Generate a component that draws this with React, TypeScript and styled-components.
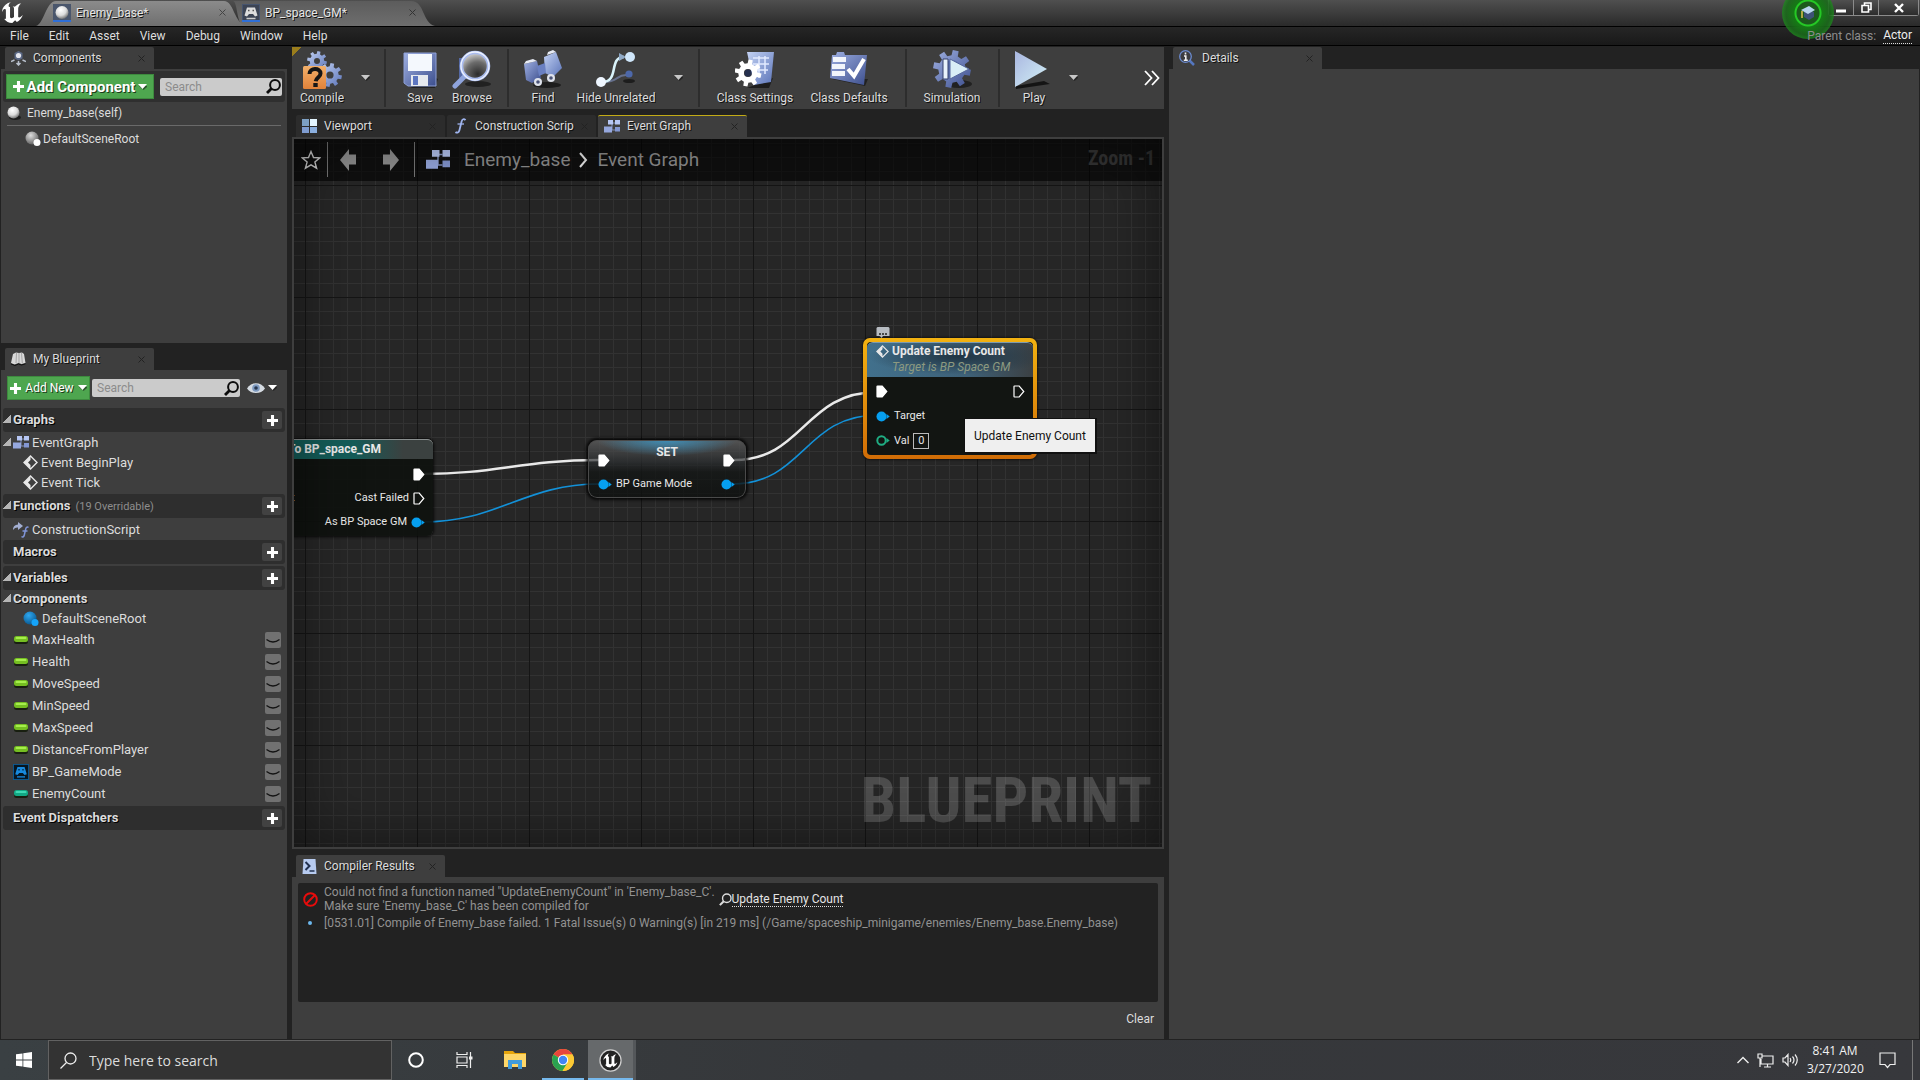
import React from "react";
import styled, { createGlobalStyle, css } from "styled-components";

const ui = `Roboto, "Liberation Sans", sans-serif`;
const narrow = `"Roboto Condensed", "Liberation Sans Narrow", Roboto, sans-serif`;
const windows = `"Segoe UI", "Open Sans", "Noto Sans", sans-serif`;

const Global = createGlobalStyle`
  *, *::before, *::after { box-sizing: border-box; }
  body { margin: 0; background: #222; overflow: hidden; }
  button, input, a { font: inherit; color: inherit; }
  button { background: none; border: 0; padding: 0; }
  input { min-width: 0; }
  a { text-decoration: none; }
  svg { display: block; flex: none; }
  ul { list-style: none; margin: 0; padding: 0; }
`;

const Shell = styled.div`
  height: 100vh;
  display: flex;
  flex-direction: column;
  background: #222;
  color: #dcdcdc;
  font: 12px/16px ${ui};
`;

/* ---------- title bar and menu ---------- */
const TitleBar = styled.header`
  height: 27px;
  display: flex;
  align-items: flex-start;
  background: linear-gradient(#4f4f4f, #2a2a2a);
  border-bottom: 1px solid #000;
`;
const LogoBox = styled.div`
  width: 36px;
  height: 26px;
  padding: 2px 0 0 1px;
`;
const AppTabs = styled.nav`
  display: flex;
  padding-top: 1px;
  flex: 1;
`;
const AppTab = styled.button<{ $front?: boolean }>`
  position: relative;
  z-index: ${(p) => (p.$front ? 1 : 0)};
  width: ${(p) => (p.$front ? 201 : 198)}px;
  height: 25px;
  display: flex;
  align-items: center;
  gap: 5px;
  padding: ${(p) => (p.$front ? "0 11px 2px 17px" : "0 19px 2px 5px")};
  text-shadow: 1px 1px 0 #111;
  color: #e6e6e6;
  text-align: left;
  > span { flex: 1; position: relative; }
  > svg { position: relative; }
`;
const TabShape = styled.svg`
  && { position: absolute; left: 0; top: 0; overflow: visible; }
`;
const WindowButtons = styled.div`
  display: flex;
  width: 91px;
  height: 16px;
  margin-right: 1px;
  border: 1px solid #8b8b8b;
  border-top: 0;
  border-radius: 0 0 3px 3px;
  button {
    display: grid;
    place-items: center;
    height: 15px;
    width: 25px;
    background: linear-gradient(#505050, #2c2c2c);
    border-right: 1px solid #8b8b8b;
  }
  button:last-child { flex: 1; border: 0; }
`;
const Halo = styled.div`
  position: absolute;
  top: -13px;
  right: 86px;
  width: 52px;
  height: 52px;
  border-radius: 50%;
  display: grid;
  place-items: center;
  background: radial-gradient(circle, #1c5a1c 0 11px, #25c825 12px 13px, #157a15 14px, #1a6a1add 22px, #1d8a1dcc 26px);
  z-index: 2;
`;
const MenuBar = styled.nav`
  height: 19px;
  display: flex;
  align-items: center;
  background: linear-gradient(#262626, #191919);
  border-bottom: 1px solid #000;
  button { padding: 0 10px; color: #dedede; }
`;
const ParentClass = styled.div`
  margin-left: auto;
  padding-right: 8px;
  display: flex;
  gap: 7px;
  color: #8e8e8e;
  position: relative;
  z-index: 3;
  a { color: #eee; border-bottom: 1px dotted #ddd; line-height: 14px; }
`;

/* ---------- docking layout ---------- */
const Workspace = styled.main`
  flex: 1;
  min-height: 0;
  display: grid;
  grid-template-columns: 286px minmax(0, 872fr) minmax(0, 750fr);
  gap: 5px;
  padding: 1px;
`;
const Column = styled.div`
  display: flex;
  flex-direction: column;
  min-height: 0;
  min-width: 0;
`;
const Panel = styled.section<{ $h?: number }>`
  display: flex;
  flex-direction: column;
  min-height: 0;
  ${(p) => (p.$h ? `flex: 0 0 ${p.$h}px;` : "flex: 1;")}
`;
const TabStrip = styled.div`
  display: flex;
  gap: 2px;
  padding-left: 4px;
  flex: none;
`;
const DockTab = styled.button<{ $state?: "back" | "active" }>`
  width: 149px;
  height: 22px;
  display: flex;
  align-items: center;
  gap: 7px;
  padding: 0 9px 1px 6px;
  background: ${(p) => (p.$state === "back" ? "#2c2c2c" : "#3e3e3e")};
  border-top: 1px solid ${(p) => (p.$state === "active" ? "#c2ab16" : "transparent")};
  border-radius: 2px 2px 0 0;
  text-shadow: 1px 1px 0 #111;
  text-align: left;
  white-space: nowrap;
  > span { flex: 1; }
`;
const PanelBody = styled.div`
  flex: 1;
  min-height: 0;
  background: #3e3e3e;
  padding: 2px;
`;
const Spacer = styled.div<{ $h: number }>`
  flex: 0 0 ${(p) => p.$h}px;
`;

/* ---------- left panels ---------- */
const ToolStrip = styled.div<{ $dark?: boolean }>`
  display: flex;
  align-items: center;
  height: ${(p) => (p.$dark ? 31 : 36)}px;
  gap: ${(p) => (p.$dark ? 6 : 2)}px;
  padding: ${(p) => (p.$dark ? "0 3px" : "0 4px 4px")};
  border-radius: 3px;
  background: ${(p) => (p.$dark ? "#2f2f2f" : "transparent")};
`;
const GreenButton = styled.button<{ $big?: boolean }>`
  display: flex;
  align-items: center;
  justify-content: center;
  flex: none;
  gap: ${(p) => (p.$big ? 3 : 4)}px;
  width: ${(p) => (p.$big ? 148 : 83)}px;
  height: ${(p) => (p.$big ? 25 : 24)}px;
  background: #4ea64f;
  border: 1px solid #3d8a3e;
  color: #fff;
  font-weight: ${(p) => (p.$big ? 700 : 400)};
  font-size: ${(p) => (p.$big ? 15 : 12)}px;
  text-shadow: 1px 1px 0 #1a3a1a;
  white-space: nowrap;
`;
const SearchField = styled.label`
  flex: 1;
  min-width: 0;
  height: 18px;
  display: flex;
  align-items: center;
  padding: 0 1px 0 5px;
  border-radius: 2px;
  background: #cbcbcb;
  input {
    flex: 1;
    border: 0;
    padding: 0;
    background: none;
    outline: 0;
    color: #222;
  }
  input::placeholder { color: #8c8c8c; opacity: 1; }
`;
const EyeButton = styled.button`
  display: flex;
  align-items: center;
  gap: 3px;
  margin: 0 4px 0 5px;
`;
const SelfRow = styled.div`
  display: flex;
  align-items: center;
  gap: 6px;
  height: 24px;
  padding-bottom: 2px;
  margin: 0 4px;
  border-bottom: 1px solid #6a6a6a;
`;
const RootRow = styled.div`
  display: flex;
  align-items: center;
  gap: 2px;
  height: 26px;
  padding-left: 22px;
`;
const Section = styled.div`
  display: flex;
  align-items: center;
  height: 24px;
  margin-bottom: 2px;
  padding-right: 3px;
  border-radius: 3px;
  background: #2e2e2e;
  font-size: 13px;
  font-weight: 700;
  text-shadow: 1px 1px 0 #000;
  small {
    font-size: 11px;
    font-weight: 400;
    color: #8d8d8d;
    margin: 2px 0 0 5px;
    text-shadow: none;
  }
`;
const OpenSection = styled(Section)`
  margin-bottom: 0;
`;
const Arrow = styled.span`
  width: 8px;
  height: 8px;
  margin-right: 2px;
  flex: none;
`;
const OpenArrow = styled(Arrow)`
  background: linear-gradient(135deg, transparent 50%, #b5b5b5 50%);
  margin-top: -2px;
`;
const PlusButton = styled.button`
  margin-left: auto;
  width: 20px;
  height: 18px;
  display: grid;
  place-items: center;
  border-radius: 2px;
  background: #424242;
`;
const Tree = styled.ul<{ $pb?: number }>`
  padding-bottom: ${(p) => p.$pb ?? 0}px;
  font-size: 13px;
`;
const TreeRow = styled.li<{ $h: number; $indent?: number; $bold?: boolean }>`
  display: flex;
  align-items: center;
  height: ${(p) => p.$h}px;
  padding: ${(p) => (p.$bold ? 0 : 1)}px 4px 0 ${(p) => p.$indent ?? 0}px;
  gap: 3px;
  font-weight: ${(p) => (p.$bold ? 700 : 400)};
  ${(p) => p.$bold && css`gap: 0; text-shadow: 1px 1px 0 #111;`}
  > ${OpenArrow} { margin-right: ${(p) => (p.$bold ? 2 : -1)}px; }
`;
const Lid = styled.button`
  margin-left: auto;
  width: 16px;
  height: 16px;
  border-radius: 2px;
  background: #717171;
`;

/* ---------- toolbar ---------- */
const Toolbar = styled.div`
  height: 62px;
  flex: none;
  display: flex;
  align-items: center;
  background: linear-gradient(135deg, #9a7d1c 7px, transparent 7px) #3e3e3e;
`;
const ToolGroup = styled.div<{ $w: number; $pad?: number }>`
  width: ${(p) => p.$w}px;
  height: 58px;
  flex: none;
  display: flex;
  align-items: center;
  padding-left: ${(p) => p.$pad ?? 0}px;
  border-right: 2px solid #2d2d2d;
`;
const LastGroup = styled(ToolGroup)`
  flex: 1;
  border: 0;
`;
const ToolButton = styled.button<{ $w: number }>`
  width: ${(p) => p.$w}px;
  height: 58px;
  flex: none;
  display: flex;
  flex-direction: column;
  align-items: center;
  padding-top: 1px;
  white-space: nowrap;
  text-shadow: 1px 1px 0 #111;
`;
const DropButton = styled.button`
  width: 28px;
  height: 50px;
  display: grid;
  place-items: center;
`;
const MoreButton = styled.button`
  margin: 0 4px 0 auto;
`;

/* ---------- graph ---------- */
const GraphFrame = styled.div`
  flex: 1;
  min-height: 0;
  border: 2px solid #3e3e3e;
  display: flex;
`;
const Canvas = styled.div`
  position: relative;
  flex: 1;
  overflow: hidden;
  background-color: #262626;
  background-image:
    linear-gradient(90deg, #151515 1px, transparent 1px),
    linear-gradient(#151515 1px, transparent 1px),
    linear-gradient(90deg, #323232 1px, transparent 1px),
    linear-gradient(#323232 1px, transparent 1px);
  background-size: 112px 112px, 112px 112px, 14px 14px, 14px 14px;
  background-position: 11px 46px;
  &::after {
    content: "";
    position: absolute;
    inset: 0;
    box-shadow: inset 0 0 60px rgba(0, 0, 0, 0.5);
    pointer-events: none;
  }
`;
const CrumbBar = styled.div`
  position: relative;
  height: 42px;
  padding-bottom: 1px;
  display: flex;
  align-items: center;
  background: rgba(0, 0, 0, 0.6);
  color: #8d8d8d;
  font-size: 19px;
  line-height: 24px;
`;
const CrumbButton = styled.button<{ $line?: boolean; $w: number }>`
  width: ${(p) => p.$w}px;
  height: 35px;
  display: grid;
  place-items: center;
  border-right: ${(p) => (p.$line ? "1px solid #777" : "0")};
`;
const Crumbs = styled.div`
  display: flex;
  align-items: center;
  gap: 9px;
  padding-left: 11px;
  > svg:first-child { margin-right: 5px; }
`;
const ZoomLabel = styled.span`
  margin-left: auto;
  padding: 0 7px 4px 0;
  font: 700 20px/24px ${narrow};
  color: #333;
`;
const Watermark = styled.div`
  position: absolute;
  right: 10px;
  bottom: 10px;
  font: 700 63px/72px ${narrow};
  color: rgba(255, 255, 255, 0.18);
`;
const Wires = styled.svg`
  position: absolute;
  inset: 0;
  width: 100%;
  height: 100%;
  fill: none;
`;
const Node = styled.article<{ $x: number; $y: number; $w: number; $h: number }>`
  position: absolute;
  left: ${(p) => p.$x}px;
  top: ${(p) => p.$y}px;
  width: ${(p) => p.$w}px;
  height: ${(p) => p.$h}px;
  border-radius: 6px;
  background: rgba(14, 17, 14, 0.92);
  box-shadow: 0 0 3px 1px rgba(0, 0, 0, 0.8), inset 0 1px 0 #777;
  color: #e8e8e8;
  font-size: 11px;
  line-height: 16px;
`;
const SetNode = styled(Node)`
  border-radius: 9px;
  background: radial-gradient(ellipse 70px 16px at 50% 0, #3f8fb8, transparent), linear-gradient(rgba(95, 95, 95, .8), rgba(45, 48, 50, .7) 22px, rgba(20, 23, 22, .8) 32px, rgba(14, 16, 15, .8));
  box-shadow: 0 0 3px 2px rgba(0, 0, 0, 0.8), inset 0 0 0 1px #4a4a4a;
`;
const SelectedNode = styled(Node)`
  background: linear-gradient(#f2b211, #d06c06);
  padding: 4px;
  border-radius: 7px;
  box-shadow: 0 0 3px #000;
`;
const SelectedInner = styled.div`
  height: 100%;
  border-radius: 4px;
  overflow: hidden;
  background: #121512;
`;
const NodeHead = styled.h3<{ $tone: "teal" | "blue" | "none" }>`
  margin: 0;
  font-size: 12px;
  font-weight: 700;
  line-height: 20px;
  height: ${(p) => ({ blue: 35, teal: 20, none: 18 })[p.$tone]}px;
  border-radius: 6px 6px 0 0;
  white-space: nowrap;
  ${(p) =>
    p.$tone === "teal" &&
    css`background: linear-gradient(90deg, #145c58 60%, #3b4140 85%); padding-right: 52px; text-align: right; border-top: 1px solid #8a8f8f; line-height: 18px;`}
  ${(p) =>
    p.$tone === "blue" &&
    css`
      background: radial-gradient(ellipse 90px 18px at 55% 40%, #203443, transparent), linear-gradient(90deg, #41708c, #3e6178 60%, #3b4043);
      padding-left: 9px;
      display: grid;
      grid-template-columns: 12px auto;
      column-gap: 4px;
      align-items: center;
      align-content: start;
      line-height: 16px;
      border-top: 1px solid #7c9bb0;
    `}
  ${(p) => p.$tone === "none" && css`text-align: center; line-height: 24px;`}
  em { grid-column: 2; font-weight: 400; color: #8d9a80; }
`;
const PinRow = styled.div<{ $h: number; $l?: number; $r?: number }>`
  display: flex;
  align-items: center;
  justify-content: space-between;
  height: ${(p) => p.$h}px;
  padding: 0 ${(p) => p.$r ?? 8}px 0 ${(p) => p.$l ?? 9}px;
`;
const PinLabel = styled.label`
  display: flex;
  align-items: center;
  gap: 4px;
  white-space: nowrap;
`;
const ValueInput = styled.input`
  width: 16px;
  height: 16px;
  padding: 0;
  border: 1px solid #bbb;
  background: transparent;
  text-align: center;
`;
const Bubble = styled.svg`
  position: absolute;
  left: 582px;
  top: 188px;
`;
const Tooltip = styled.div`
  position: absolute;
  left: 670px;
  top: 279px;
  padding: 9px 9px 8px;
  background: #efefef;
  border: 1px solid #111;
  border-right-width: 2px;
  border-bottom-width: 2px;
  color: #111;
  font-size: 12px;
  line-height: 16px;
  white-space: nowrap;
  z-index: 1;
`;

/* ---------- compiler results ---------- */
const ResultsBody = styled.div`
  flex: 1;
  display: flex;
  flex-direction: column;
  background: #3e3e3e;
  padding: 6px;
`;
const Log = styled.ul`
  flex: 0 0 119px;
  background: #222;
  border-radius: 2px;
  color: #929292;
  && { padding: 2px 5px; }
  li {
    display: flex;
    align-items: center;
    line-height: 14px;
    padding-bottom: 3px;
  }
  li > svg { margin-right: 6px; }
  a { display: flex; align-items: center; margin-left: 4px; color: #e5e5e5; }
  a span { border-bottom: 1px dotted #ddd; }
`;
const Bullet = styled.i`
  width: 4px;
  height: 4px;
  margin: 0 12px 0 5px;
  border-radius: 50%;
  background: #6cb8ee;
`;
const ClearButton = styled.button`
  margin: 9px 4px 0 auto;
`;

/* ---------- taskbar ---------- */
const Taskbar = styled.footer`
  height: 40px;
  flex: none;
  display: flex;
  align-items: stretch;
  background: linear-gradient(90deg, #3a4043, #35373a 45%, #37383c);
  color: #f2f2f2;
  font: 12px/18px ${windows};
`;
const TaskButton = styled.button<{ $run?: boolean; $on?: boolean; $w?: number }>`
  width: ${(p) => p.$w ?? 48}px;
  display: grid;
  place-items: center;
  ${(p) => p.$on && css`background: #66696b; margin-left: 4px; border-right: 3px solid #54575a;`}
  ${(p) => p.$run && css`box-shadow: inset 0 -2px 0 #76b9ed;`}
`;
const TaskSearch = styled.label`
  width: 344px;
  display: flex;
  align-items: center;
  gap: 12px;
  padding-left: 11px;
  background: #333;
  border: 1px solid #626262;
  input {
    flex: 1;
    border: 0;
    padding: 1px 0 0;
    background: none;
    font-size: 14px;
    outline: 0;
  }
  input::placeholder { color: #dcdcdc; opacity: 1; }
`;
const Tray = styled.div`
  margin-left: auto;
  display: flex;
  align-items: center;
  gap: 8px;
  padding-right: 4px;
`;
const Clock = styled.time`
  width: 56px;
  margin-right: 8px;
  text-align: center;
`;
const ShowDesktop = styled.button`
  align-self: stretch;
  margin-left: 8px;
  width: 4px;
  border-left: 1px solid #777;
`;

/* ---------- icons ---------- */
const gear = (cx: number, cy: number, r: number, teeth = 8) => {
  const pts: string[] = [];
  for (let i = 0; i < teeth; i++) {
    const a = (i / teeth) * Math.PI * 2 + 0.2;
    const s = (Math.PI * 2) / teeth;
    [[0.72, -0.3], [1, -0.2], [1, 0.2], [0.72, 0.3]].forEach(([k, o]) =>
      pts.push(`${(cx + Math.cos(a + o * s) * r * k).toFixed(2)} ${(cy + Math.sin(a + o * s) * r * k).toFixed(2)}`)
    );
  }
  const h = r * 0.3;
  return `M${pts.join("L")}Z M${cx - h} ${cy}a${h} ${h} 0 1 0 ${h * 2} 0a${h} ${h} 0 1 0 ${-h * 2} 0Z`;
};

const U_PATH =
  "M19.13 13.729c-.206.997-1.126 3.557-4.06 4.942l-1.179-1.325-1.988 2a7.338 7.338 0 01-5.804-2.978 2.859 2.859 0 00.65.123c.326.006.678-.114.678-.66v-5.394a.89.89 0 00-1.116-.89c-.92.212-1.656 2.509-1.656 2.509a7.304 7.304 0 012.528-5.597 7.408 7.408 0 013.73-1.721c-1.006.573-1.57 1.507-1.57 2.29 0 1.262.76 1.109.984.923v7.28a1.157 1.157 0 00.148.256 1.075 1.075 0 00.88.445c.76 0 1.747-.868 1.747-.868V9.172c0-.6-.452-1.324-.905-1.572 0 0 .838.149 1.484.346a5.537 5.537 0 01.387-.425c1.508-1.48 2.929-1.902 4.112-2.112 0 0-2.151 1.69-2.151 3.96 0 1.687.043 5.801.043 5.801.799.771 1.986-.342 3.059-1.441Z";

const DefsSvg = styled.svg`
  position: absolute;
`;
const Defs = () => (
  <DefsSvg width="0" height="0" aria-hidden>
    <defs>
      <linearGradient id="blue" x1="0" y1="0" x2="1" y2="1">
        <stop offset="0" stopColor="#c3d2f4" />
        <stop offset="1" stopColor="#5b74b8" />
      </linearGradient>
      <linearGradient id="deep" x1="0" y1="0" x2="1" y2="1">
        <stop offset="0" stopColor="#9fb0e2" />
        <stop offset="1" stopColor="#3d4f8e" />
      </linearGradient>
      <linearGradient id="ice" x1="0" y1="0" x2="1" y2="1">
        <stop offset="0" stopColor="#a9b6e0" />
        <stop offset="1" stopColor="#d3f1f6" />
      </linearGradient>
      <linearGradient id="orange" x1="0" y1="0" x2="0" y2="1">
        <stop offset="0" stopColor="#f3b06a" />
        <stop offset="1" stopColor="#e0823a" />
      </linearGradient>
      <radialGradient id="ball" cx=".4" cy=".3" r=".7">
        <stop offset="0" stopColor="#fff" />
        <stop offset=".6" stopColor="#dcdcdc" />
        <stop offset="1" stopColor="#777" />
      </radialGradient>
      <radialGradient id="gray" cx=".4" cy=".3" r=".7">
        <stop offset="0" stopColor="#ddd" />
        <stop offset="1" stopColor="#666" />
      </radialGradient>
      <radialGradient id="azure" cx=".4" cy=".3" r=".7">
        <stop offset="0" stopColor="#2fa8f0" />
        <stop offset="1" stopColor="#0a5c96" />
      </radialGradient>
      <radialGradient id="lens" cx=".6" cy=".8" r=".9">
        <stop offset="0" stopColor="#2c2c2c" />
        <stop offset=".5" stopColor="#6c6c6c" />
        <stop offset="1" stopColor="#f2f2f2" />
      </radialGradient>
      <linearGradient id="tabFront" x1="0" y1="0" x2="0" y2="1">
        <stop offset="0" stopColor="#8b8b8b" />
        <stop offset="1" stopColor="#6f6f6f" />
      </linearGradient>
      <linearGradient id="tabBack" x1="0" y1="0" x2="0" y2="1">
        <stop offset="0" stopColor="#5c5c5c" />
        <stop offset="1" stopColor="#6e6e6e" />
      </linearGradient>
    </defs>
  </DefsSvg>
);

const Unreal = ({ size }: { size: number }) => (
  <svg width={size} height={size} viewBox="4 4.6 15.4 15.4" fill="#fff">
    <path d={U_PATH} />
  </svg>
);
const Close = ({ tone = "#222" }: { tone?: string }) => (
  <svg width="7" height="7" viewBox="0 0 7 7" stroke={tone}>
    <path d="M.5.5l6 6M6.5.5l-6 6" />
  </svg>
);
const Down = ({ fill = "#fff" }: { fill?: string }) => (
  <svg width="9" height="6" viewBox="0 0 9 6">
    <path d="M1 2h9L5.5 6z" fill="#1118" />
    <path d="M0 0h9L4.5 5z" fill={fill} />
  </svg>
);
const Plus = ({ s = 10 }: { s?: number }) => (
  <svg width={s} height={s} viewBox="0 0 10 10">
    <path d="M3.6 0h2.8v3.6H10v2.8H6.4V10H3.6V6.4H0V3.6h3.6z" fill="#fff" />
  </svg>
);
const Magnifier = ({ size = 15, tone = "#0c0c0c", w = 2 }: { size?: number; tone?: string; w?: number }) => (
  <svg width={size} height={size} viewBox="0 0 15 15" fill="none" stroke={tone} strokeWidth={w}>
    <circle cx="9" cy="6" r="4.9" />
    <path d="M5.5 9.5L1 14" strokeWidth={w + 0.8} />
  </svg>
);
const Ball = ({ s = 14 }: { s?: number }) => (
  <svg width={s} height={s} viewBox="0 0 14 14">
    <ellipse cx="8" cy="11.5" rx="6" ry="2.5" fill="#0008" />
    <circle cx="6.5" cy="6.5" r="6" fill="url(#ball)" />
  </svg>
);
const SceneRoot = ({ blue }: { blue?: boolean }) => (
  <svg width="16" height="16" viewBox="0 0 16 16">
    <circle cx="7" cy="7" r="6.5" fill={blue ? "url(#azure)" : "url(#gray)"} />
    <circle cx="12" cy="11.5" r="3.5" fill={blue ? "#15a4fa" : "#fff"} />
  </svg>
);
const Pad = ({ blue, s = 18 }: { blue?: boolean; s?: number }) => (
  <svg width={s} height={s} viewBox="0 0 18 18">
    <rect x=".5" y=".5" width="17" height="17" fill={blue ? "#061622" : "#3c4454"} stroke={blue ? "#0b5c96" : "#46546e"} />
    <path d="M5 3.500h8l2.500 8-2.500 1-2-2.500H7L5 12.500l-2.500-1z" fill={blue ? "#1789dd" : "#ddd"} />
    <path d="M6 6.500h1.500M10.500 6.500H12" stroke={blue ? "#06263c" : "#555"} strokeWidth="1.5" />
    <path d="M4.500 14.500h9" stroke={blue ? "#1789dd" : "#ccc"} strokeWidth="1.5" />
    {!blue && <path d="M0 17h18" stroke="#2e6fd8" strokeWidth="2" />}
  </svg>
);
const GraphIcon = ({ w = 16 }: { w?: number }) => (
  <svg width={w} height={(w * 13) / 16} viewBox="0 0 16 13">
    <path d="M5 3h6M8 3v7M6 10h5" stroke="#8391bd" fill="none" />
    <rect x="4" y="0" width="5" height="4.5" fill="#b6c6f3" />
    <rect x="11" y="0" width="5" height="4.5" fill="#b6c6f3" />
    <rect x="0" y="6.5" width="8" height="6" fill="#96a8de" />
    <rect x="11" y="7" width="5" height="4.5" fill="#8497d2" />
  </svg>
);
const ViewportIcon = () => (
  <svg width="15" height="15" viewBox="0 0 15 15">
    <rect x="0" y="0" width="7" height="7" fill="#7da0c4" />
    <rect x="8" y="0" width="7" height="7" fill="#e3f5ff" />
    <rect x="0" y="8" width="7" height="6" fill="#7f9cd0" />
    <rect x="8" y="8" width="7" height="6" fill="#8aaede" />
  </svg>
);
const FuncIcon = () => (
  <svg width="15" height="16" viewBox="0 0 15 16" fill="none" stroke="#9fb4ee" strokeWidth="1.8">
    <path d="M12.5 2.200C11 .4 9.200 1 8.600 3.500L6.500 12c-.6 2.500-2.500 3.400-4 2" />
    <path d="M4.500 6h6.500" strokeWidth="1.3" />
  </svg>
);
const OverrideIcon = () => (
  <svg width="16" height="16" viewBox="0 0 16 16" fill="none">
    <path d="M5 0l5 4-5 4V5.500C3 5.300 1.500 6 0 8c0-3.500 2-5.500 5-5.600z" fill="#a3afd2" />
    <path d="M15.500 5.500c-1-1-2.300-.5-2.700 1.200L11.300 13c-.4 1.800-1.600 2.400-2.800 1.500M9.500 9h5" stroke="#8095d8" strokeWidth="1.5" />
  </svg>
);
const ComponentsIcon = () => (
  <svg width="15" height="15" viewBox="0 0 15 15">
    <path d="M3.500 2l4-2 4 2v5.500l-4 2-4-2z" fill="#5b6884" />
    <circle cx="7.500" cy="4.500" r="2.600" fill="#e4e6ee" />
    <path d="M3.500 9L0 10.500M11.500 9l3.500 1.500M7.500 10v4M5.500 12l2 2 2-2" stroke="#b9c0cc" strokeWidth="1.5" fill="none" />
  </svg>
);
const BookIcon = () => (
  <svg width="15" height="15" viewBox="0 0 15 15">
    <path d="M2 2l3-1.500 3 .5 3-.5L13 2l1.500 9-4 1-3-1-4 1.500L0 11z" fill="#d9d9d9" />
    <path d="M5.500 1L5 11M8 1v10M10.500 1l.8 10" stroke="#a5a5a5" />
    <path d="M0 12l4 1.500 3.500-1.500 3 1 4-1.200" stroke="#111" fill="none" />
  </svg>
);
const InfoIcon = () => (
  <svg width="16" height="16" viewBox="0 0 16 16">
    <path d="M10 10l5 5" stroke="#5577c0" strokeWidth="2.5" />
    <circle cx="6.500" cy="6.500" r="5.800" fill="#3c3c40" stroke="#6b8bd0" strokeWidth="1.3" />
    <path d="M6.500 2.500v2M5 6h1.800v4M4.800 10.200h4" stroke="#eee" strokeWidth="1.6" fill="none" />
  </svg>
);
const ConsoleIcon = () => (
  <svg width="15" height="15" viewBox="0 0 14 15">
    <path d="M1 0h12l1 15H0z" fill="#b7cbf0" />
    <path d="M3 3l4 4-4 4" stroke="#20304f" strokeWidth="2" fill="none" />
    <path d="M7 12h5" stroke="#20304f" strokeWidth="1.5" />
  </svg>
);
const Diamond = ({ s = 15 }: { s?: number }) => (
  <svg width={s} height={s} viewBox="0 0 15 15" fill="none">
    <path d="M7.500 1L14 7.500 7.500 14 1 7.500z" stroke="#e8e8e8" strokeWidth="1.4" />
    <path d="M7.500 1v4L5 7.500 7.500 10v4L1 7.500z" fill="#e8e8e8" />
  </svg>
);
const Pill = ({ teal }: { teal?: boolean }) => (
  <svg width="16" height="9" viewBox="0 0 16 9">
    <rect x="1" y="3" width="14" height="6" rx="2.5" fill="#181f10" />
    <rect x="1" y="1" width="14" height="6" rx="2.5" fill={teal ? "#12a884" : "#75be22"} />
    <rect x="2.500" y="2" width="11" height="2" rx="1" fill={teal ? "#3fd9b4" : "#a6ee4c"} />
  </svg>
);
const Eye = () => (
  <svg width="18" height="12" viewBox="0 0 18 12">
    <path d="M0 6.500C4-.5 14-.5 18 6.500 14 12.500 4 12.500 0 6.500z" fill="#d5dbe2" />
    <circle cx="9" cy="6" r="3.800" fill="#7d99bf" />
    <circle cx="9" cy="6" r="1.800" fill="#26364e" />
  </svg>
);
const ExecPin = ({ open }: { open?: boolean }) => (
  <svg width="12" height="13" viewBox="0 0 12 13">
    <path d="M1.500 1h4.700l4.600 5.500-4.600 5.500H1.500Q1 12 1 11.500V1.500Q1 1 1.500 1z" fill={open ? "none" : "#fff"} stroke="#fff" strokeWidth="1.2" />
  </svg>
);
const DataPin = ({ green }: { green?: boolean }) => (
  <svg width="14" height="11" viewBox="0 0 14 11">
    <path d="M10.500 3l3.200 2.500-3.200 2.500z" fill={green ? "#1fae83" : "#069ff0"} />
    <circle cx="5.500" cy="5.500" r={green ? 4.2 : 5} fill={green ? "none" : "#069ff0"} stroke={green ? "#1fae83" : "none"} strokeWidth="2" />
  </svg>
);

const Big = ({ children }: { children: React.ReactNode }) => (
  <svg width="40" height="40" viewBox="0 0 40 40">{children}</svg>
);
const CompileIcon = () => (
  <Big>
    <path d={gear(15, 11, 10)} fill="url(#blue)" fillRule="evenodd" />
    <path d={gear(28, 25, 12)} fill="url(#blue)" fillRule="evenodd" />
    <rect x="1" y="16" width="23" height="23" rx="1.5" fill="url(#orange)" />
    <path d="M7.500 24c0-6.500 11-6.500 11-.6 0 4-4.300 4-4.800 7.800" stroke="#161616" strokeWidth="4" fill="none" />
    <rect x="11.300" y="33" width="4.400" height="4" fill="#161616" />
  </Big>
);
const SaveIcon = () => (
  <Big>
    <path d="M10 38h25l3-9-4-2z" fill="#0007" />
    <path d="M4 3h32v33H8l-4-3z" fill="url(#deep)" />
    <path d="M4 3h32v33H8l-4-3z" fill="none" stroke="#8ea0d6" />
    <rect x="8" y="4" width="24" height="17" fill="#f4f8fd" />
    <rect x="11" y="25" width="17" height="11" fill="#e6e9ee" />
    <rect x="13" y="26" width="5" height="9" fill="#5d76c0" />
  </Big>
);
const BrowseIcon = () => (
  <Big>
    <path d="M7 8h9v20H7z" fill="#5569a4" />
    <ellipse cx="26" cy="34" rx="13" ry="3" fill="#0007" />
    <path d="M14 25L3 36" stroke="#8fa4dc" strokeWidth="5" strokeLinecap="round" />
    <circle cx="23" cy="16" r="13.5" fill="url(#lens)" stroke="#a9bbee" strokeWidth="3.5" />
    <circle cx="23" cy="16" r="14" fill="none" stroke="#eef3ff" strokeWidth="1.3" />
  </Big>
);
const FindIcon = () => (
  <Big>
    <ellipse cx="24" cy="35" rx="14" ry="3" fill="#0008" />
    <path d="M1 14l13-3 4 17-9 5-6-3z" fill="url(#deep)" />
    <path d="M21 7l12-5 6 16-9 9-8-4z" fill="url(#blue)" />
    <path d="M14 16l8-3 1 10-7 3z" fill="#6a80c2" />
    <path d="M1 14l13-3-4-2-7 2zM24 5l9-3-3-2-5 2z" fill="#e7ebf5" />
    <circle cx="15" cy="32" r="4" fill="#dfe3ec" />
    <circle cx="28" cy="28" r="4" fill="#dfe3ec" />
    <circle cx="15" cy="32" r="1.800" fill="#4a5378" />
    <circle cx="28" cy="28" r="1.800" fill="#4a5378" />
  </Big>
);
const HideIcon = () => (
  <Big>
    <path d="M8 32c14 0 12-7 22-7" stroke="#66708c" strokeWidth="2" fill="none" />
    <ellipse cx="33" cy="31" rx="6" ry="2" fill="#0008" />
    <circle cx="33" cy="24" r="3.600" fill="#4d68aa" />
    <path d="M6 32c18 0 6-25 22-25" stroke="#d9f3fa" strokeWidth="2.6" fill="none" />
    <path d="M23 3l7 4-7 4" fill="#8fa9c6" />
    <circle cx="5" cy="32" r="5" fill="#eef6ff" />
    <circle cx="34" cy="7" r="5" fill="#cfe6fa" />
  </Big>
);
const SettingsIcon = () => (
  <Big>
    <path d="M12 38h22l4-10z" fill="#0008" />
    <path d="M12 2h27l-3 30-17 3z" fill="url(#blue)" />
    <path d="M18 8h16M18 14h16M22 20h11M24 6v22M30 6v18" stroke="#e2eaff" strokeWidth="1.5" />
    <path d={gear(13, 23, 13.5)} fill="#fff" fillRule="evenodd" />
    <circle cx="13" cy="23" r="3.500" fill="#26304e" />
  </Big>
);
const DefaultsIcon = () => (
  <Big>
    <path d="M3 29l33 7 3-7z" fill="#0007" />
    <path d="M8 2h7l1 3h22l-3 30L1 28 3 5h4z" fill="url(#deep)" />
    <path d="M4 7h13v5H4zM3 14h13v5H3zM3 21h13v5H3z" fill="#f2f5fb" />
    <path d="M19 19l6 7 10-17" stroke="#fff" strokeWidth="4" fill="none" />
  </Big>
);
const SimulateIcon = () => (
  <Big>
    <ellipse cx="27" cy="34" rx="13" ry="4" fill="#0007" />
    <path d={gear(20, 19, 19)} fill="url(#deep)" />
    <circle cx="20" cy="19" r="9" fill="#5a72b2" />
    <path d="M11 9h5v20h-5z" fill="#e8f2fb" stroke="#35416c" />
    <path d="M18 9l19 10-19 10z" fill="#d9eef6" stroke="#56679c" />
  </Big>
);
const PlayIcon = () => (
  <Big>
    <path d="M2 39l34-5-6-3-28 5z" fill="#000a" />
    <path d="M1 1l32 18L1 37z" fill="url(#ice)" />
  </Big>
);
const FolderIcon = () => (
  <svg width="22" height="20" viewBox="0 0 22 20">
    <path d="M0 1h9l2 2h11v14H0z" fill="#e6a50c" />
    <path d="M0 4h22v13H0z" fill="#fdd668" />
    <path d="M4 19v-9h14v9h-4v-5H8v5z" fill="#3f9bdc" />
  </svg>
);
const ChromeIcon = () => (
  <svg width="22" height="22" viewBox="0 0 22 22">
    <circle cx="11" cy="11" r="11" fill="#fcc934" />
    <path d="M11 11L1.500 5.500A11 11 0 0 1 20.500 5.500H11z" fill="#e8453c" />
    <path d="M11 11L1.500 5.500A11 11 0 0 0 10.500 22l5-8z" fill="#2aa350" />
    <path d="M11 5.500h9.500A11 11 0 0 1 10.500 22l5-8z" fill="#fcc934" />
    <circle cx="11" cy="11" r="5.200" fill="#fff" />
    <circle cx="11" cy="11" r="4.200" fill="#4285f4" />
  </svg>
);

/* ---------- data ---------- */
const menus = ["File", "Edit", "Asset", "View", "Debug", "Window", "Help"];
const variables = [
  { name: "MaxHealth", kind: "float" },
  { name: "Health", kind: "float" },
  { name: "MoveSpeed", kind: "float" },
  { name: "MinSpeed", kind: "float" },
  { name: "MaxSpeed", kind: "float" },
  { name: "DistanceFromPlayer", kind: "float" },
  { name: "BP_GameMode", kind: "object" },
  { name: "EnemyCount", kind: "int" },
];

const Tool = ({ w, icon, label }: { w: number; icon: React.ReactNode; label: string }) => (
  <ToolButton $w={w}>
    {icon}
    <span>{label}</span>
  </ToolButton>
);
const Dock = ({ icon, label, state }: { icon: React.ReactNode; label: string; state?: "back" | "active" }) => (
  <DockTab $state={state}>
    {icon}
    <span>{label}</span>
    <Close />
  </DockTab>
);
const Drop = ({ label }: { label: string }) => (
  <DropButton aria-label={label}>
    <Down fill="#c8c8c8" />
  </DropButton>
);
const Add = ({ label }: { label: string }) => (
  <PlusButton aria-label={label}>
    <Plus s={11} />
  </PlusButton>
);

const LeftColumn = () => (
  <Column>
    <Panel $h={296}>
      <TabStrip>
        <Dock icon={<ComponentsIcon />} label="Components" />
      </TabStrip>
      <PanelBody>
        <ToolStrip $dark>
          <GreenButton $big>
            <Plus s={11} />
            Add Component
            <Down />
          </GreenButton>
          <SearchField>
            <input aria-label="Search components" placeholder="Search" />
            <Magnifier />
          </SearchField>
        </ToolStrip>
        <SelfRow>
          <Ball />
          Enemy_base(self)
        </SelfRow>
        <RootRow>
          <SceneRoot />
          DefaultSceneRoot
        </RootRow>
      </PanelBody>
    </Panel>
    <Spacer $h={5} />
    <Panel>
      <TabStrip>
        <Dock icon={<BookIcon />} label="My Blueprint" />
      </TabStrip>
      <PanelBody>
        <ToolStrip>
          <GreenButton>
            <Plus s={11} />
            Add New
            <Down />
          </GreenButton>
          <SearchField>
            <input aria-label="Search blueprint" placeholder="Search" />
            <Magnifier />
          </SearchField>
          <EyeButton aria-label="View options">
            <Eye />
            <Down />
          </EyeButton>
        </ToolStrip>
        <OpenSection>
          <OpenArrow />
          Graphs
          <Add label="Add graph" />
        </OpenSection>
        <Tree $pb={2}>
          <TreeRow $h={20}>
            <OpenArrow />
            <GraphIcon />
            EventGraph
          </TreeRow>
          <TreeRow $h={20} $indent={20}>
            <Diamond />
            Event BeginPlay
          </TreeRow>
          <TreeRow $h={20} $indent={20}>
            <Diamond />
            Event Tick
          </TreeRow>
        </Tree>
        <OpenSection>
          <OpenArrow />
          Functions
          <small>(19 Overridable)</small>
          <Add label="Add function" />
        </OpenSection>
        <Tree>
          <TreeRow $h={22} $indent={10}>
            <OverrideIcon />
            ConstructionScript
          </TreeRow>
        </Tree>
        <Section>
          <Arrow />
          Macros
          <Add label="Add macro" />
        </Section>
        <OpenSection>
          <OpenArrow />
          Variables
          <Add label="Add variable" />
        </OpenSection>
        <Tree $pb={2}>
          <TreeRow $h={18} $bold>
            <OpenArrow />
            Components
          </TreeRow>
          <TreeRow $h={20} $indent={20}>
            <SceneRoot blue />
            DefaultSceneRoot
          </TreeRow>
          {variables.map((v) => (
            <TreeRow key={v.name} $h={22} $indent={10}>
              {v.kind === "object" ? <Pad blue s={16} /> : <Pill teal={v.kind === "int"} />}
              {v.name}
              <Lid aria-label={`Toggle ${v.name}`}>
                <svg width="16" height="16" viewBox="0 0 16 16" fill="none">
                  <path d="M1.500 7.500q6.500 5 13 0" stroke="#141414" strokeWidth="1.4" />
                </svg>
              </Lid>
            </TreeRow>
          ))}
        </Tree>
        <Section>
          <Arrow />
          Event Dispatchers
          <Add label="Add dispatcher" />
        </Section>
      </PanelBody>
    </Panel>
  </Column>
);

const Graph = () => (
  <Canvas>
    <Watermark>BLUEPRINT</Watermark>
    <Wires>
      <g stroke="#e9e9e9" strokeWidth="2.5">
        <path d="M130 335C200 335 230 321 305 321" />
        <path d="M440 321C510 321 510 253 584 253" />
      </g>
      <g stroke="#1391d8" strokeWidth="1.6">
        <path d="M128 383C205 383 230 345 305 345" />
        <path d="M438 345C510 345 510 276 584 276" />
      </g>
    </Wires>
    <CrumbBar>
      <CrumbButton $w={34} $line aria-label="Favourite">
        <svg width="20" height="20" viewBox="0 0 20 20" fill="none" stroke="#d5d5d5" strokeWidth="1.4">
          <path d="M10 1.500l2.500 6 6.300.4-4.900 4 1.700 6.300L10 14.800l-5.600 3.400 1.700-6.300-4.900-4 6.300-.4z" />
        </svg>
      </CrumbButton>
      <CrumbButton $w={40} aria-label="Back">
        <svg width="16" height="22" viewBox="0 0 16 22">
          <path d="M0 11L9 0v5.500h7v10H9V22z" fill="#8f8f8f" />
        </svg>
      </CrumbButton>
      <CrumbButton $w={47} $line aria-label="Forward">
        <svg width="16" height="22" viewBox="0 0 16 22">
          <path d="M16 11L7 0v5.500H0v10h7V22z" fill="#8f8f8f" />
        </svg>
      </CrumbButton>
      <Crumbs>
        <GraphIcon w={24} />
        <span>Enemy_base</span>
        <svg width="9" height="16" viewBox="0 0 9 16" fill="none" stroke="#e8e8e8" strokeWidth="2">
          <path d="M1 1l6 7-6 7" />
        </svg>
        <span>Event Graph</span>
      </Crumbs>
      <ZoomLabel>Zoom -1</ZoomLabel>
    </CrumbBar>

    <Node $x={-60} $y={300} $w={199} $h={97}>
      <NodeHead $tone="teal">Cast To BP_space_GM</NodeHead>
      <PinRow $h={30}>
        <span />
        <ExecPin />
      </PinRow>
      <PinRow $h={18} $l={29}>
        <span>Object</span>
        <PinLabel as="span">
          Cast Failed
          <ExecPin open />
        </PinLabel>
      </PinRow>
      <PinRow $h={30}>
        <span />
        <PinLabel as="span">
          As BP Space GM
          <DataPin />
        </PinLabel>
      </PinRow>
    </Node>

    <SetNode $x={294} $y={301} $w={158} $h={58}>
      <NodeHead $tone="none">SET</NodeHead>
      <PinRow $h={4} $l={10} $r={11}>
        <ExecPin />
        <ExecPin />
      </PinRow>
      <PinRow $h={44} $l={10} $r={11}>
        <PinLabel as="span">
          <DataPin />
          BP Game Mode
        </PinLabel>
        <DataPin />
      </PinRow>
    </SetNode>

    <SelectedNode $x={569} $y={199} $w={174} $h={121}>
      <SelectedInner>
        <NodeHead $tone="blue">
          <Diamond s={13} />
          <span>Update Enemy Count</span>
          <em>Target is BP Space GM</em>
        </NodeHead>
        <PinRow $h={29}>
          <ExecPin />
          <ExecPin open />
        </PinRow>
        <PinRow $h={20}>
          <PinLabel as="span">
            <DataPin />
            Target
          </PinLabel>
        </PinRow>
        <PinRow $h={29}>
          <PinLabel>
            <DataPin green />
            Val
            <ValueInput defaultValue="0" />
          </PinLabel>
        </PinRow>
      </SelectedInner>
    </SelectedNode>
    <Bubble width="14" height="11" viewBox="0 0 14 11">
      <path d="M1.500 0h11l1 1v8H7l-1.500 2L4 9H.5V1z" fill="#b7bcc2" />
      <path d="M3 7h2M6 7h2M9 7h2" stroke="#222" strokeWidth="1.5" />
    </Bubble>
    <Tooltip role="tooltip">Update Enemy Count</Tooltip>
  </Canvas>
);

const CenterColumn = () => (
  <Column>
    <Toolbar>
      <ToolGroup $w={94} $pad={1}>
        <Tool w={58} icon={<CompileIcon />} label="Compile" />
        <Drop label="Compile options" />
      </ToolGroup>
      <ToolGroup $w={123} $pad={8}>
        <Tool w={52} icon={<SaveIcon />} label="Save" />
        <Tool w={52} icon={<BrowseIcon />} label="Browse" />
      </ToolGroup>
      <ToolGroup $w={191} $pad={9}>
        <Tool w={50} icon={<FindIcon />} label="Find" />
        <Tool w={96} icon={<HideIcon />} label="Hide Unrelated" />
        <Drop label="Hide unrelated options" />
      </ToolGroup>
      <ToolGroup $w={207} $pad={8}>
        <Tool w={94} icon={<SettingsIcon />} label="Class Settings" />
        <Tool w={94} icon={<DefaultsIcon />} label="Class Defaults" />
      </ToolGroup>
      <ToolGroup $w={93} $pad={8}>
        <Tool w={74} icon={<SimulateIcon />} label="Simulation" />
      </ToolGroup>
      <LastGroup $w={160} $pad={9}>
        <Tool w={50} icon={<PlayIcon />} label="Play" />
        <Drop label="Play options" />
        <MoreButton aria-label="More tools">
          <svg width="16" height="16" viewBox="0 0 16 16" fill="none" stroke="#fff" strokeWidth="1.8">
            <path d="M1 1l6.500 7L1 15M8 1l6.500 7L8 15" />
          </svg>
        </MoreButton>
      </LastGroup>
    </Toolbar>
    <Spacer $h={6} />
    <Panel>
      <TabStrip>
        <Dock icon={<ViewportIcon />} label="Viewport" state="back" />
        <Dock icon={<FuncIcon />} label="Construction Scrip" state="back" />
        <Dock icon={<GraphIcon />} label="Event Graph" state="active" />
      </TabStrip>
      <GraphFrame>
        <Graph />
      </GraphFrame>
    </Panel>
    <Spacer $h={6} />
    <Panel $h={184}>
      <TabStrip>
        <Dock icon={<ConsoleIcon />} label="Compiler Results" />
      </TabStrip>
      <ResultsBody>
        <Log>
          <li>
            <svg width="15" height="15" viewBox="0 0 15 15" fill="none" stroke="#e80c0c" strokeWidth="1.9">
              <circle cx="7.500" cy="7.500" r="6.300" />
              <path d="M3 12L12 3" />
            </svg>
            <span>
              Could not find a function named "UpdateEnemyCount" in 'Enemy_base_C'.
              <br />
              Make sure 'Enemy_base_C' has been compiled for
            </span>
            <a href="#node">
              <Magnifier size={13} tone="#ddd" w={1.6} />
              <span>Update Enemy Count</span>
            </a>
          </li>
          <li>
            <Bullet />
            <span>
              [0531.01] Compile of Enemy_base failed. 1 Fatal Issue(s) 0 Warning(s) [in 219 ms] (/Game/spaceship_minigame/enemies/Enemy_base.Enemy_base)
            </span>
          </li>
        </Log>
        <ClearButton>Clear</ClearButton>
      </ResultsBody>
    </Panel>
  </Column>
);

export default function App() {
  return (
    <Shell>
      <Global />
      <Defs />
      <TitleBar>
        <LogoBox>
          <Unreal size={22} />
        </LogoBox>
        <AppTabs>
          <AppTab $front>
            <TabShape width="213" height="25" viewBox="0 0 213 25">
              <path d="M0 25C8 23 10 0 20 0h168c10 0 10 22 22 25z" fill="url(#tabFront)" />
            </TabShape>
            <svg width="18" height="18" viewBox="0 0 18 18">
              <path d="M0 0h18v18H0z" fill="#4a566c" />
              <path d="M0 17h18" stroke="#2e6fd8" strokeWidth="2" />
              <circle cx="9" cy="8.500" r="6.500" fill="url(#ball)" />
            </svg>
            <span>Enemy_base*</span>
            <Close tone="#444" />
          </AppTab>
          <AppTab>
            <TabShape width="198" height="25" viewBox="0 0 198 25">
              <path d="M5 25C0 20 0 0-4 0h178c14 0 11 22 24 25z" fill="url(#tabBack)" />
            </TabShape>
            <Pad />
            <span>BP_space_GM*</span>
            <Close tone="#333" />
          </AppTab>
        </AppTabs>
        <Halo>
          <svg width="16" height="16" viewBox="0 0 16 16">
            <path d="M4 7l5-2 5 2v5l-5 3-5-3z" fill="#3d5277" />
            <path d="M1 5l8-4 6 4-7 4z" fill="#b8d4ee" />
            <path d="M2 6v7" stroke="#e0c050" strokeWidth="1.5" />
          </svg>
        </Halo>
        <WindowButtons>
          <button aria-label="Minimize">
            <svg width="10" height="10" viewBox="0 0 10 10"><path d="M0 8h10" stroke="#fff" strokeWidth="3" /></svg>
          </button>
          <button aria-label="Restore">
            <svg width="11" height="11" viewBox="0 0 11 11" fill="none" stroke="#fff" strokeWidth="1.6">
              <path d="M3.500 3V1h6.500v6.500H8" />
              <path d="M1 3.500h6.500V10H1z" />
            </svg>
          </button>
          <button aria-label="Close">
            <svg width="10" height="10" viewBox="0 0 10 10" stroke="#fff" strokeWidth="2.4"><path d="M1 1l8 8M9 1L1 9" /></svg>
          </button>
        </WindowButtons>
      </TitleBar>
      <MenuBar>
        {menus.map((m) => (
          <button key={m}>{m}</button>
        ))}
        <ParentClass>
          Parent class: <a href="#actor">Actor</a>
        </ParentClass>
      </MenuBar>
      <Workspace>
        <LeftColumn />
        <CenterColumn />
        <Panel>
          <TabStrip>
            <Dock icon={<InfoIcon />} label="Details" />
          </TabStrip>
          <PanelBody />
        </Panel>
      </Workspace>
      <Taskbar>
        <TaskButton aria-label="Start">
          <svg width="16" height="16" viewBox="0 0 16 16" fill="#fff">
            <path d="M0 2.300l6.500-.9v6.200H0zM7.300 1.200L16 0v7.600H7.300zM0 8.400h6.500v6.200L0 13.700zM7.300 8.400H16V16l-8.700-1.200z" />
          </svg>
        </TaskButton>
        <TaskSearch>
          <svg width="17" height="17" viewBox="0 0 17 17" fill="none" stroke="#eee" strokeWidth="1.3">
            <circle cx="10.500" cy="6.500" r="5.500" />
            <path d="M6.500 10.500L.5 16.500" />
          </svg>
          <input aria-label="Search Windows" placeholder="Type here to search" />
        </TaskSearch>
        <TaskButton aria-label="Cortana">
          <svg width="16" height="16" viewBox="0 0 16 16" fill="none" stroke="#fff" strokeWidth="2"><circle cx="8" cy="8" r="6.800" /></svg>
        </TaskButton>
        <TaskButton aria-label="Task View">
          <svg width="17" height="16" viewBox="0 0 17 16" fill="none" stroke="#eee" strokeWidth="1.2">
            <path d="M1 0v2.500h10V0M1 16v-2.500h10V16M1 5h10v6H1zM14.500 0v16" />
            <path d="M13 4.500h3.500v3H13z" fill="#eee" stroke="none" />
          </svg>
        </TaskButton>
        <TaskButton $w={54} aria-label="File Explorer"><FolderIcon /></TaskButton>
        <TaskButton $run $w={42} aria-label="Chrome"><ChromeIcon /></TaskButton>
        <TaskButton $run $on aria-label="Unreal Editor">
          <svg width="23" height="23" viewBox="0 0 24 24">
            <circle cx="12" cy="12" r="11" fill="#222" stroke="#d0d0d0" strokeWidth="1.3" />
            <path d={U_PATH} fill="#fff" />
          </svg>
        </TaskButton>
        <Tray>
          <svg width="12" height="8" viewBox="0 0 12 8" fill="none" stroke="#eee" strokeWidth="1.4"><path d="M.5 7L6 1.500 11.500 7" /></svg>
          <svg width="17" height="15" viewBox="0 0 17 15" fill="none" stroke="#eee" strokeWidth="1.2">
            <path d="M5 3h11v8H4V6M7 14h7M10.500 11v3M1 1h4v4H1zM3 5v9" />
          </svg>
          <svg width="17" height="14" viewBox="0 0 17 14" fill="none" stroke="#eee" strokeWidth="1.2">
            <path d="M1 5h2l3-3.500v11L3 9H1zM8 5q1.500 2 0 4M10.500 3.500q3 3.500 0 7M13 1.500q4.500 5.500 0 11" />
          </svg>
          <Clock>
            8:41 AM
            <br />
            3/27/2020
          </Clock>
          <svg width="17" height="17" viewBox="0 0 17 17" fill="none" stroke="#eee" strokeWidth="1.2">
            <path d="M1 1h15v11.500h-5L8.500 15.500 6 12.500H1z" />
          </svg>
          <ShowDesktop aria-label="Show desktop" />
        </Tray>
      </Taskbar>
    </Shell>
  );
}
